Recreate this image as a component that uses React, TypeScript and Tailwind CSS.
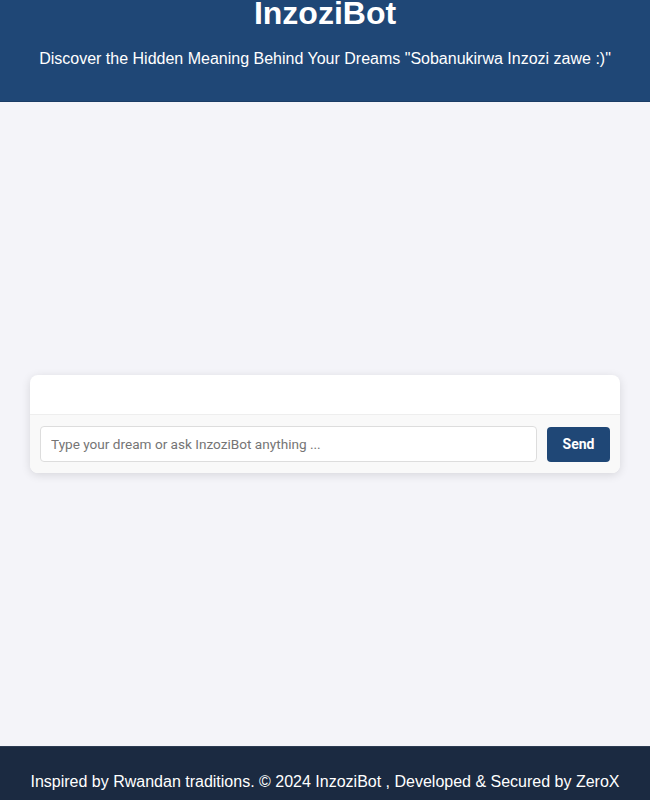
export default function App() {
  return (
    <div className="min-h-screen flex flex-col bg-[#f4f4f9] font-['Liberation_Sans',Arial,sans-serif]">
      <header className="h-[102px] shrink-0 bg-[#1f4776] text-white text-center border-b border-[#1a3c66]">
        <h1 className="text-[32px] font-bold leading-[32px] -mt-[3px]">InzoziBot</h1>
        <p className="mt-[18px] text-base">
          Discover the Hidden Meaning Behind Your Dreams &quot;Sobanukirwa Inzozi zawe :)&quot;
        </p>
      </header>

      <main className="flex-1 flex items-center justify-center px-[30px]">
        <div className="w-full bg-white rounded-lg shadow-[0_2px_10px_rgba(0,0,0,0.12)] overflow-hidden">
          <div className="h-10 border-b border-[#eeeeee]" />
          <div className="flex items-center gap-2.5 px-2.5 py-[11px] bg-[#f9f9f9]">
            <input
              type="text"
              placeholder="Type your dream or ask InzoziBot anything ..."
              className="flex-1 h-9 px-2.5 bg-white border border-[#dddddd] rounded text-[13.6px] text-gray-800 placeholder:text-[#757575] outline-none font-['Roboto',Arial,sans-serif]"
            />
            <button className="w-[63px] h-[35px] bg-[#1f4776] text-white text-sm font-bold rounded font-['Roboto',Arial,sans-serif]">
              Send
            </button>
          </div>
        </div>
      </main>

      <footer className="h-[54px] shrink-0 bg-[#1b2a41] text-white text-center pt-[26px] text-base leading-[18px] border-t border-[#2c3b52]">
        Inspired by Rwandan traditions. © 2024 InzoziBot , Developed &amp; Secured by ZeroX
      </footer>
    </div>
  )
}
